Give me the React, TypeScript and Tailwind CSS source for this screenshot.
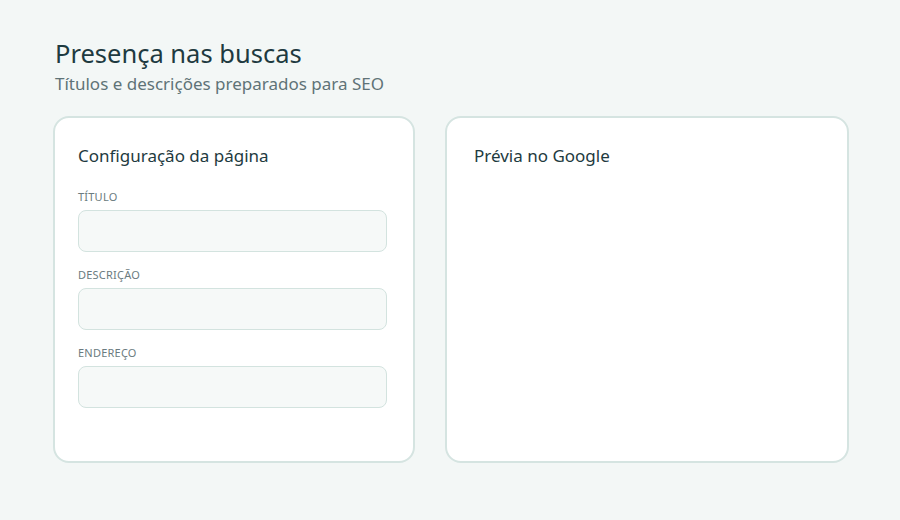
import React from "react";

function Field({ label }: { label: string }) {
  return (
    <div className="flex flex-col">
      <div className="text-[11px] leading-[16px] tracking-[0.02em] text-[#6b7b80] uppercase">{label}</div>
      <div className="mt-[5px] h-[42px] rounded-[8px] border border-[#d3e3df] bg-[#f6f9f8]" />
    </div>
  );
}

export default function App() {
  return (
    <div
      className="w-[900px] h-[520px] bg-[#f3f7f6] pl-[53px] pr-[46px] pt-[35px]"
      style={{ fontFamily: '"Noto Sans", "Open Sans", sans-serif' }}
    >
      <h1 className="text-[25.5px] leading-[36px] text-[#1e3a40] ml-[2px]">Presença nas buscas</h1>
      <p className="text-[17px] leading-[24px] text-[#5f7377] ml-[2px] mt-[1px]">Títulos e descrições preparados para SEO</p>
      <div className="mt-[20px] flex gap-[30px]">
        <div className="w-[362px] h-[347px] shrink-0 rounded-[16px] border-2 border-[#d5e4e1] bg-white pl-[23px] pr-[26px] pt-[26px]">
          <h2 className="text-[17px] leading-[24px] text-[#1e3a40]">Configuração da página</h2>
          <div className="mt-[21px] flex flex-col gap-[15px]">
            <Field label="Título" />
            <Field label="Descrição" />
            <Field label="Endereço" />
          </div>
        </div>
        <div className="w-[404px] h-[347px] shrink-0 rounded-[16px] border-2 border-[#d5e4e1] bg-white pl-[27px] pt-[26px]">
          <h2 className="text-[17px] leading-[24px] text-[#1e3a40]">Prévia no Google</h2>
        </div>
      </div>
    </div>
  );
}
